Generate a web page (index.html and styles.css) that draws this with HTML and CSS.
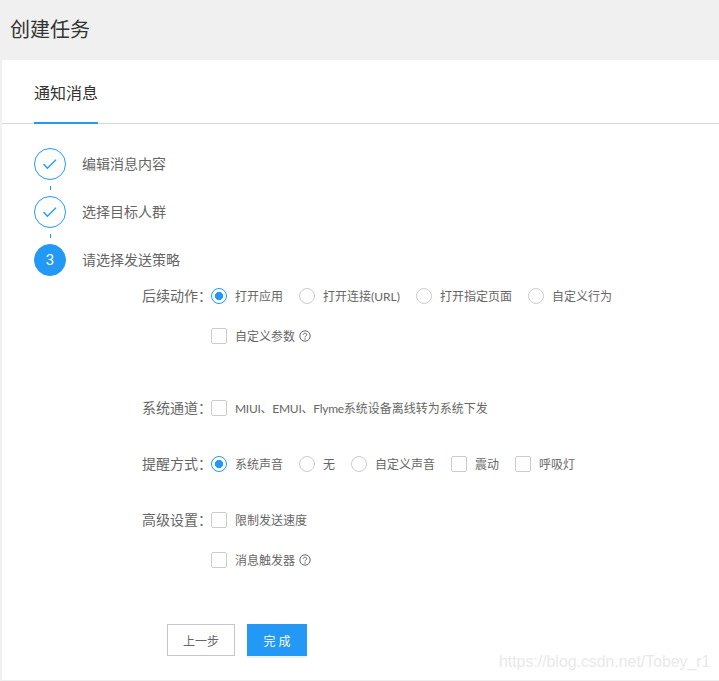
FILE: index.html
```html
<!DOCTYPE html>
<html lang="zh-CN">
<head>
    <meta charset="UTF-8">
    <meta name="viewport" content="width=device-width, initial-scale=1.0">
    <title>创建任务</title>
    <link rel="stylesheet" href="styles.css">
</head>
<body>
    <div class="pageHeader">创建任务</div>
    <div class="card">
        <div class="tabBar">
            <div class="tab">通知消息</div>
        </div>
        <div class="steps">
            <div class="step">
                <div class="stepCircle">
                    <svg width="16" height="16" viewBox="0 0 16 16"><path d="M1.5 8 L5.4 12.2 L14 3.7" fill="none" stroke="#2399f5" stroke-width="1.3"/></svg>
                </div>
                <div class="stepText">编辑消息内容</div>
            </div>
            <div class="stepLine"></div>
            <div class="step">
                <div class="stepCircle">
                    <svg width="16" height="16" viewBox="0 0 16 16"><path d="M1.5 8 L5.4 12.2 L14 3.7" fill="none" stroke="#2399f5" stroke-width="1.3"/></svg>
                </div>
                <div class="stepText">选择目标人群</div>
            </div>
            <div class="stepLine"></div>
            <div class="step">
                <div class="stepCircle stepCurrent">3</div>
                <div class="stepText">请选择发送策略</div>
            </div>
        </div>
        <div class="form">
            <div class="formRow">
                <div class="formLabel">后续动作：</div>
                <div class="option"><span class="radio radioOn"></span>打开应用</div>
                <div class="option"><span class="radio"></span>打开连接(URL)</div>
                <div class="option"><span class="radio"></span>打开指定页面</div>
                <div class="option"><span class="radio"></span>自定义行为</div>
            </div>
            <div class="formRow rowSub">
                <div class="formLabel"></div>
                <div class="option"><span class="check"></span>自定义参数
                    <svg class="help" width="12" height="12" viewBox="0 0 12 12"><circle cx="6" cy="6" r="5.2" fill="none" stroke="#666" stroke-width="1"/><path d="M4.3 4.8 C4.3 2.7 7.8 2.8 7.8 4.7 C7.8 6 6 5.9 6 7.4" fill="none" stroke="#666" stroke-width="1"/><circle cx="6" cy="9" r="0.7" fill="#666"/></svg>
                </div>
            </div>
            <div class="formRow rowChannel">
                <div class="formLabel">系统通道：</div>
                <div class="option"><span class="check"></span><span class="brands">MIUI、EMUI、Flyme</span>系统设备离线转为系统下发</div>
            </div>
            <div class="formRow rowGroup">
                <div class="formLabel">提醒方式：</div>
                <div class="option"><span class="radio radioOn"></span>系统声音</div>
                <div class="option"><span class="radio"></span>无</div>
                <div class="option"><span class="radio"></span>自定义声音</div>
                <div class="option"><span class="check"></span>震动</div>
                <div class="option"><span class="check"></span>呼吸灯</div>
            </div>
            <div class="formRow rowGroup">
                <div class="formLabel">高级设置：</div>
                <div class="option"><span class="check"></span>限制发送速度</div>
            </div>
            <div class="formRow rowSub">
                <div class="formLabel"></div>
                <div class="option"><span class="check"></span>消息触发器
                    <svg class="help" width="12" height="12" viewBox="0 0 12 12"><circle cx="6" cy="6" r="5.2" fill="none" stroke="#666" stroke-width="1"/><path d="M4.3 4.8 C4.3 2.7 7.8 2.8 7.8 4.7 C7.8 6 6 5.9 6 7.4" fill="none" stroke="#666" stroke-width="1"/><circle cx="6" cy="9" r="0.7" fill="#666"/></svg>
                </div>
            </div>
        </div>
        <div class="actions">
            <button class="btn btnPrev">上一步</button>
            <button class="btn btnDone">完 成</button>
        </div>
    </div>
    <div class="watermark">https://blog.csdn.net/Tobey_r1</div>
</body>
</html>
```

FILE: styles.css
```css
html, body {
    margin: 0;
    padding: 0;
    height: 681px;
    overflow: hidden;
    background-color: #f0f0f0;
    font-family: "Lato", "Noto Sans CJK SC", sans-serif;
    color: #666;
}
div.pageHeader {
    height: 60px;
    line-height: 58px;
    padding-left: 10px;
    font-size: 20px;
    color: #333;
}
div.card {
    margin-left: 2px;
    height: 620px;
    background-color: #fff;
    border-bottom: 1px solid #eee;
}
div.tabBar {
    height: 63px;
    padding-left: 32px;
    border-bottom: 1px solid #d9d9d9;
    display: flex;
}
div.tab {
    width: 64px;
    height: 64px;
    line-height: 66px;
    box-sizing: border-box;
    border-bottom: 2px solid #2399f5;
    font-size: 16px;
    color: #333;
}
div.steps {
    padding: 24px 0 0 32px;
}
div.step {
    display: flex;
    align-items: center;
    height: 32px;
}
div.stepCircle {
    width: 32px;
    height: 32px;
    box-sizing: border-box;
    border: 1px solid #2399f5;
    border-radius: 50%;
    display: flex;
    align-items: center;
    justify-content: center;
    color: #fff;
    font-size: 15px;
    font-family: "Roboto", sans-serif;
}
div.stepCurrent {
    background-color: #2399f5;
}
div.stepText {
    margin-left: 16px;
    padding-bottom: 2px;
    font-size: 14px;
    color: #666;
}
div.stepLine {
    width: 1px;
    height: 4px;
    margin: 6px 0 6px 16px;
    background-color: #2399f5;
}
div.form {
    padding-left: 140px;
    margin-top: 8px;
}
div.formRow {
    display: flex;
    align-items: center;
    gap: 16px;
    height: 24px;
    font-size: 12px;
}
div.rowSub {
    margin-top: 16px;
}
div.rowChannel {
    margin-top: 48px;
}
div.rowGroup {
    margin-top: 32px;
}
div.formLabel {
    width: 69px;
    margin-right: -16px;
    padding-bottom: 2px;
    font-size: 14px;
    white-space: nowrap;
}
div.option {
    display: flex;
    align-items: center;
    white-space: nowrap;
    padding-bottom: 2px;
}
span.radio, span.check {
    width: 16px;
    height: 16px;
    box-sizing: border-box;
    border: 1px solid #ccc;
    margin-right: 8px;
    margin-bottom: -2px;
    flex-shrink: 0;
    background-color: #fff;
}
span.radio {
    border-radius: 50%;
}
span.radioOn {
    border-color: #2399f5;
    background: radial-gradient(circle, #2399f5 0, #2399f5 3.8px, #fff 4.4px);
}
span.check {
    border-radius: 2px;
}
span.brands {
    letter-spacing: -0.27px;
}
svg.help {
    margin-left: 4px;
    margin-bottom: -2px;
}
div.actions {
    display: flex;
    gap: 12px;
    padding-left: 165px;
    margin-top: 52px;
}
button.btn {
    height: 32px;
    box-sizing: border-box;
    font-family: inherit;
    font-size: 12px;
    padding: 0;
    border-radius: 0;
}
button.btnPrev {
    width: 68px;
    background-color: #fff;
    color: #666;
    border: 1px solid #c5c5cd;
}
button.btnDone {
    width: 60px;
    background-color: #2399f5;
    color: #fff;
    border: none;
    box-shadow: 0 2px 0 #f0f0f0;
}
div.watermark {
    position: absolute;
    left: 499px;
    top: 653px;
    font-family: "Liberation Sans", sans-serif;
    font-size: 15.85px;
    color: #e9e9e9;
}
```
